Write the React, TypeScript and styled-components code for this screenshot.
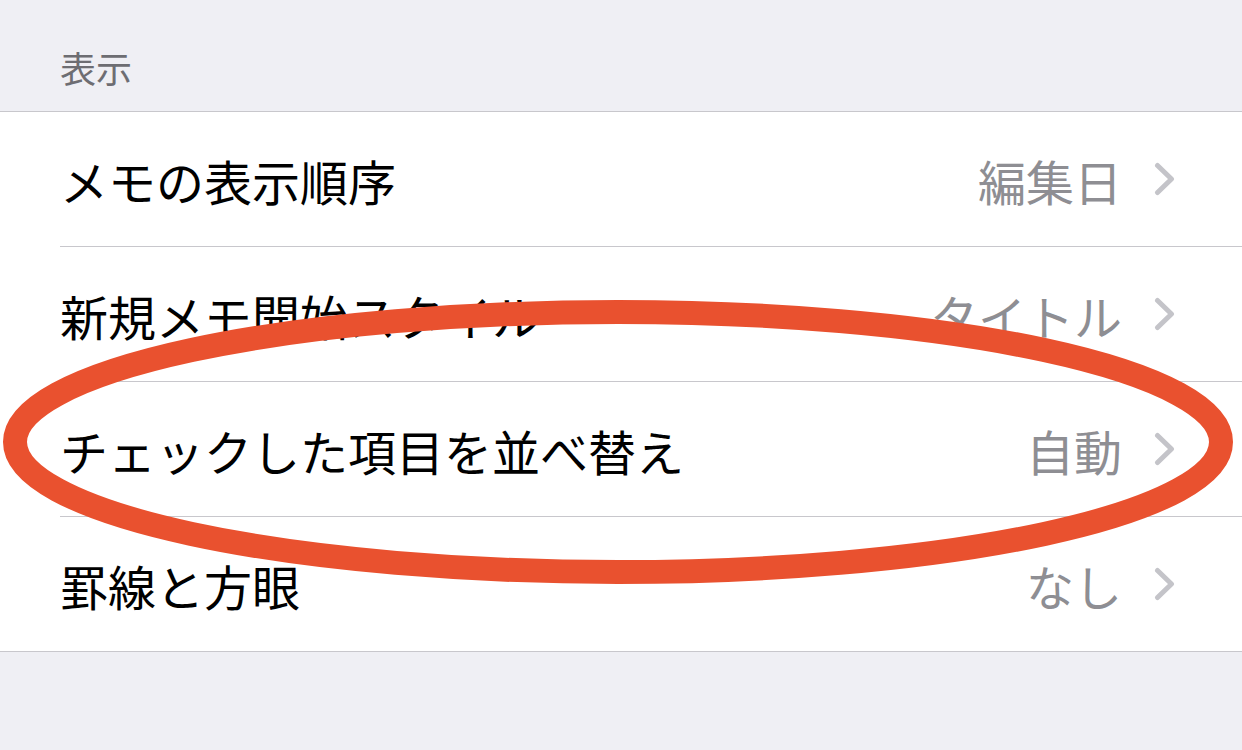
import React from 'react';
import styled, { createGlobalStyle } from 'styled-components';

const GlobalStyle = createGlobalStyle`
  html, body {
    margin: 0;
    padding: 0;
    background-color: #efeff4;
  }
  body {
    font-family: "Noto Sans CJK JP", "Noto Sans", sans-serif;
    -webkit-font-smoothing: antialiased;
  }
`;

const Page = styled.div`
  position: relative;
  width: 1242px;
  height: 750px;
  overflow: hidden;
  background-color: #efeff4;
`;

const SectionHeader = styled.div`
  height: 111px;
  box-sizing: border-box;
  padding: 49px 0 0 60px;
  font-size: 36px;
  line-height: 1;
  color: #6d6d72;
`;

const List = styled.div`
  background-color: #fff;
  border-top: 1px solid #c8c7cc;
  border-bottom: 1px solid #c8c7cc;
`;

const Row = styled.div`
  padding-left: 60px;
`;

const RowInner = styled.div<{ $last?: boolean }>`
  display: flex;
  align-items: center;
  box-sizing: border-box;
  height: ${p => (p.$last ? '134px' : '135px')};
  padding-right: 66px;
  border-bottom: ${p => (p.$last ? 'none' : '1px solid #c8c7cc')};
`;

const Label = styled.span`
  flex: 1;
  font-size: 48px;
  line-height: 1;
  color: #000;
  padding-top: 2px;
`;

const Value = styled.span`
  font-size: 48px;
  line-height: 1;
  color: #8e8e93;
  margin-right: 32px;
  padding-top: 2px;
`;

const Chevron = styled.svg`
  width: 22px;
  height: 34px;
  flex-shrink: 0;
`;

const Annotation = styled.svg`
  position: absolute;
  left: 0;
  top: 0;
  pointer-events: none;
`;

const settings = [
  { label: 'メモの表示順序', value: '編集日' },
  { label: '新規メモ開始スタイル', value: 'タイトル' },
  { label: 'チェックした項目を並べ替え', value: '自動' },
  { label: '罫線と方眼', value: 'なし' },
];

const ChevronIcon = () => (
  <Chevron viewBox="0 0 22 34">
    <path
      d="M3.5 3.5 L17.5 17 L3.5 30.5"
      fill="none"
      stroke="#c4c4c9"
      strokeWidth="5"
      strokeLinecap="round"
      strokeLinejoin="round"
    />
  </Chevron>
);

const App: React.FC = () => {
  return (
    <Page>
      <GlobalStyle />
      <SectionHeader>表示</SectionHeader>
      <List>
        {settings.map((item, i) => (
          <Row key={item.label}>
            <RowInner $last={i === settings.length - 1}>
              <Label>{item.label}</Label>
              <Value>{item.value}</Value>
              <ChevronIcon />
            </RowInner>
          </Row>
        ))}
      </List>
      <Annotation width="1242" height="750" viewBox="0 0 1242 750">
        <ellipse
          cx="618"
          cy="442"
          rx="603"
          ry="130"
          fill="none"
          stroke="#e9512f"
          strokeWidth="24"
        />
      </Annotation>
    </Page>
  );
};

export default App;
